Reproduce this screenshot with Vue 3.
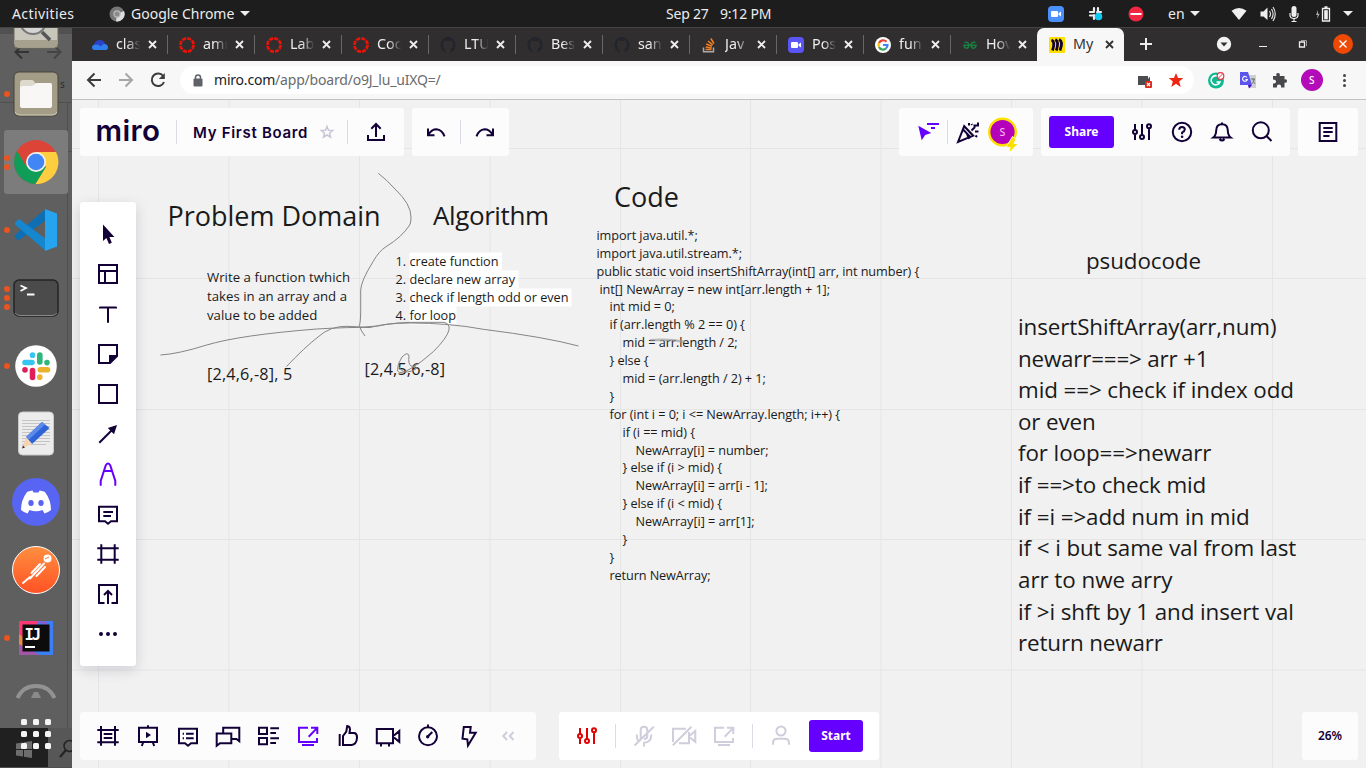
<script setup>
// circle as a path segment, so every icon is one stroke path plus one fill path
const c = (x, y, r) => `M${x - r} ${y}a${r} ${r} 0 1 0 ${2 * r} 0a${r} ${r} 0 1 0 ${-2 * r} 0`

const sliders = { s: `M5 4V9.5M5 14.5V20M12 4V14.5M19 9V20${c(5, 12, 2)}${c(12, 17, 2)}${c(19, 6.3, 2)}` }
const icons = {
  cursor: { f: 'M7 2.5V19L10.4 16L13 22L15.8 20.8L13.4 15H18.4Z' },
  template: { s: 'M3 3H21V21H3ZM3 9H21M9 9V21' },
  text: { s: 'M4 4.700V5.500H20V4.700M12 5.500V20.700' },
  sticky: { s: 'M3 3H21V14L14 21H3Z', f: 'M13 13H21.5L13 21.5Z' },
  square: { s: 'M3 3H21V21H3Z' },
  arrow: { s: 'M3.3 20.7L17 7', f: 'M21 3L11.8 6L18 12.2Z' },
  pen: { s: 'M4.7 23.7V19L9.8 3.2Q12 0 14.2 3.2L19.3 19V23.7M8 9H16' },
  comment: { s: 'M3 4.8H21V19.3H15L12 21.7L9 19.3H3ZM7.3 10H17M7.3 14H15' },
  frame: { s: 'M5.3 2.3V21.7M18.7 2.3V21.7M1.3 6.3H22.7M1.3 17.7H22.7' },
  upload: { s: 'M8.5 21H3V3H21V21H15.5M12 22V9M8 13L12 9L16 13' },
  more: { f: c(5, 12, 2) + c(12, 12, 2) + c(19, 12, 2) },
  export: { s: 'M4 15V20H20V15M12 17V4M7.3 8.7L12 4L16.7 8.7' },
  undo: { s: 'M4 8.5V15.2H10.5M4.5 14.5Q7.5 9.3 12.5 9.3Q18 9.8 20.5 16.3' },
  redo: { s: 'M20 8.5V15.2H13.5M19.5 14.5Q16.5 9.3 11.5 9.3Q6 9.8 3.5 16.3' },
  reactions: { s: 'M11 4H23M15 8H19', f: 'M2.3 5.7L15.3 13L9.2 15L5.7 20.3Z' },
  party: { s: 'M2 22L8.2 6.2L17.2 15.7ZM7 9.5L15 17.6M11 14L13 19M15.5 10.5L18.5 7.5V5.5H22V2.5M19 11.5H22.5M13 3V5.5M19.5 15.5L21 17M15.5 4L16 5' },
  sliders,
  help: { s: `${c(12, 12, 9.2)}M9.2 9.8Q9.2 7 12 7Q14.8 7 14.8 9.5Q14.8 11 12.1 12.5V14.3`, f: c(12.1, 16.8, 1.3) },
  bell: { s: 'M3.3 17.5Q6 15.5 6.2 10.5Q6.3 4.3 12 4.3Q17.7 4.3 17.8 10.5Q18 15.5 20.7 17.5ZM12 2.5V4M9.5 19Q12 22 14.5 19' },
  search: { s: `${c(10.8, 10.3, 8)}M16.5 16L21.5 21` },
  notes: { s: 'M3.7 3H20.3V21H3.7ZM7.3 8H16.7M7.3 12H16.7M7.3 16H13.5' },
  frames: { s: 'M5 2V21.7M19 2V21.7M1.3 6H22.7M1.3 18.3H22.7M7.7 10H16.3M7.7 14H16.3' },
  present: { s: 'M3 3.7H21V18H3ZM12 1.3V3.7M7.3 18L5.8 22M16.7 18L18.2 22', f: 'M10 7.8L15 11L10 14.2Z' },
  cards: { s: 'M3 4.7H21V19.3H15L12 21.7L9 19.3H3ZM6.7 9.7H8M10 9.7H17.7M6.7 14.3H8M10 14.3H17.7' },
  chat: { s: 'M7.2 9V3.7H23.3V17.2L20.5 15H16M.7 21.7V9.5H15.3V19.3H4Z' },
  list: { s: 'M3 3.7H11V10H3ZM3 14H11V20.3H3ZM14.3 4.3H23M14.3 9H20M14.3 14.3H23M14.3 19H20' },
  share: { s: 'M12 3.7H3V18H21V14M12.7 12.7L20.5 4.6M15 3.7H21.3V10M6 21H18' },
  thumb: { s: 'M3.7 10V22M7 21V12L10.3 7.5L11.2 2Q14 2.2 14 5.5L13.5 9H18.5Q21.3 10 21 14Q20.5 20.5 15.5 21Z' },
  camera: { s: 'M.8 5H17V19.3H.8ZM18 11.5L23.3 7V17.8L18 13.5M5 19.3V22.5M13 19.3V22.5' },
  timer: { s: `${c(12, 12.3, 9)}M12 .5V3M12 12.3L16.3 8`, f: c(11.7, 12.7, 1.7) },
  bolt: { s: 'M7.8 3H14.7L14 8.7H19.7L12 21.5L11.3 15.3L6.5 14.7Z' },
  collapse: { s: 'M11 8L7.3 12L11 16M17.5 8L13.8 12L17.5 16' },
  micoff: { s: 'M8.7 15V6Q8.7 2.7 12 2.7Q15.3 2.7 15.3 6V12Q15.3 15 12 15M4.7 10.5Q4.7 15 6.5 17M19.3 10.5Q19.3 18.7 12 18.7V22.5M2.5 21.5L21.8 2.7' },
  camoff: { s: 'M1 18V4.7H14M17 8V19.3H7M18 11.5L23.3 7V17.8L18 13.5M.8 21.3L19.5 2.7' },
  person: { s: `${c(12, 7, 4.6)}M4 20.7V19Q4 14.7 8.3 14.7H15.7Q20 14.7 20 19V20.7` },
}

const tools = ['cursor', 'template', 'text', 'sticky', 'square', 'arrow', 'pen', 'comment', 'frame', 'upload', 'more']
const bottomTools = ['frames', 'present', 'cards', 'chat', 'list', 'share', 'thumb', 'camera', 'timer', 'bolt', 'collapse']

const tabs = [
  ['cloud', 'clas'], ['canvas', 'amr'], ['canvas', 'Lab'], ['canvas', 'Coc'], ['github', 'LTU'], ['github', 'Bes'],
  ['github', 'san'], ['stack', 'Jav'], ['zoom', 'Pos'], ['google', 'fun'], ['gfg', 'Hov'], ['miro', 'My'],
]

const dock = [
  ['viewer', 0], ['files', 1], ['chrome', 2], ['code', 1], ['terminal', 3], ['slack', 1],
  ['editor', 0], ['discord', 0], ['postman', 0], ['idea', 1],
]

const gridX = [98.5, 229, 359.5, 490, 620.5, 750.5, 881, 1011.5, 1142, 1272.5]
const gridY = [148.5, 278.5, 409.5, 539.5, 670]

// board text: content, x, baseline, size, advance width
const code = [
  ['import java.util.*;', 0, 101.3], ['import java.util.stream.*;', 0, 145.5],
  ['public static void insertShiftArray(int[] arr, int number) {', 0, 322.7],
  ['int[] NewArray = new int[arr.length + 1];', 3, 230.5], ['int mid = 0;', 13, 65.3],
  ['if (arr.length % 2 == 0) {', 13, 135.3], ['mid = arr.length / 2;', 26, 115.2], ['} else {', 13, 39],
  ['mid = (arr.length / 2) + 1;', 26, 143.3], ['}', 13, 5],
  ['for (int i = 0; i <= NewArray.length; i++) {', 13, 230.5], ['if (i == mid) {', 26, 72.5],
  ['NewArray[i] = number;', 39, 133], ['} else if (i > mid) {', 26, 99.5], ['NewArray[i] = arr[i - 1];', 39, 132.3],
  ['} else if (i < mid) {', 26, 99.5], ['NewArray[i] = arr[1];', 39, 119], ['}', 26, 5], ['}', 13, 5],
  ['return NewArray;', 13, 101],
].map(([t, dx, w], i) => [t, 596.5 + dx, 240 + i * 18 - (i > 3) - (i > 12), 12.7, w])

const pseudo = [
  ['insertShiftArray(arr,num)', 335, 258.5], ['newarr===> arr +1', 367, 190.5], ['mid ==> check if index odd', 398, 276],
  ['or even', 430, 77.7], ['for loop==>newarr', 461, 193.5], ['if ==>to check mid', 493, 188.3],
  ['if =i =>add num in mid', 525, 231.7], ['if < i but same val from last', 556, 278.3], ['arr to nwe arry', 588, 154.5],
  ['if >i shft by 1 and insert val', 620, 276], ['return newarr', 651, 145],
].map(([t, y, w]) => [t, 1018, y, 22.4, w])

const steps = [['1.', 'create function', 89, 92.5], ['2.', 'declare new array', 105.5, 109], ['3.', 'check if length odd or even', 159, 162], ['4.', 'for loop', 46.5, 47]]

const texts = [
  ['Problem Domain', 167.5, 225.5, 27, 213], ['Algorithm', 433, 225, 26, 116], ['Code', 614, 206.7, 27, 65],
  ['Write a function twhich', 207, 282, 13.2, 143], ['takes in an array and a', 207, 301, 13.2, 140], ['value to be added', 207, 320, 13.2, 110.3],
  ['[2,4,6,-8], 5', 207, 379.5, 16.2, 85.3], ['[2,4,5,6,-8]', 364.5, 374.7, 16.2, 80.5], ['psudocode', 1086, 268.7, 22.4, 115],
  ...steps.flatMap(([n, t, w], i) => [[n, 395.5, 266 + i * 18, 12.7, 10.7], [t, 409.5, 266 + i * 18, 12.7, w]]),
  ...code, ...pseudo,
]
</script>

<template>
  <div class="screen">
    <header class="topbar">
      <span class="activities">Activities</span>
      <svg class="appicon" width="16" height="16" viewBox="0 0 16 16"><circle cx="8" cy="8" r="7.5" fill="#777" /><path d="M8 8L15 5A7.5 7.5 0 0 1 7 15.4Z" fill="#ddd" /><circle cx="8" cy="8" r="3.7" fill="#bbb" /><circle cx="8" cy="8" r="2.5" fill="#8b8b8b" /></svg>
      <span class="appname">Google Chrome</span>
      <i class="caret"></i>
      <span class="date">Sep 27</span><span class="time">9:12 PM</span>
      <div class="tray">
        <svg width="16" height="16" viewBox="0 0 16 16"><rect width="16" height="16" rx="4" fill="#4a90ff" /><rect x="3" y="5" width="7" height="6" rx="1" fill="#fff" /><path d="M10.5 7.3L13 5.5V10.5L10.5 8.7Z" fill="#fff" /></svg>
        <svg class="t-slack" width="16" height="16" viewBox="0 0 16 16"><path d="M6 2V7M10 2V7M2 6H7M9 6H14M2 9.5H7M6 9V14" stroke="#eee" stroke-width="2.200" stroke-linecap="round" stroke-dasharray="4 1" /><circle cx="10.500" cy="10.500" r="3.800" fill="#12c8f0" /></svg>
        <svg class="t-stop" width="16" height="16" viewBox="0 0 16 16"><circle cx="8" cy="8" r="7.5" fill="#f02642" /><path d="M2.5 8H13.5" stroke="#fff" stroke-width="2" /></svg>
        <span class="lang">en</span><i class="caret"></i>
        <svg class="t-wifi" width="16" height="16" viewBox="0 0 16 16"><path d="M.5 4.8Q8 -1 15.5 4.8L8 14Z" fill="#f0f0f0" /></svg>
        <svg class="t-vol" width="16" height="16" viewBox="0 0 16 16"><path d="M.5 5.5H3.5L7.5 1.5V14L3.5 10.5H.5Z" fill="#eee" /><path d="M9.5 5Q11.5 8 9.5 11M11.5 3Q14.7 8 11.5 13M13 1Q17.5 8 13 15" stroke="#ddd" stroke-width="1.2" fill="none" /></svg>
        <svg class="t-mic" width="16" height="16" viewBox="0 0 16 16"><rect x="5.5" y="0" width="5" height="11" rx="2.5" fill="#eee" /><path d="M4 7V9Q4 12.5 8 12.5Q12 12.5 12 9V7M8 13V15.5M5.5 15.5H10.5" stroke="#eee" fill="none" stroke-width="1.2" /></svg>
        <svg class="t-bat" width="16" height="16" viewBox="0 0 16 16"><path d="M7.5 2.5H14.5V15H7.5ZM9.5 1H12.5" stroke="#eee" fill="none" stroke-width="1.3" /><rect x="9.2" y="4.2" width="3.6" height="9.2" fill="#eee" /><path d="M3 4L1 9H2.7L2 13L4.7 7.7H3Z" fill="#aaa" /></svg>
        <i class="caret"></i>
      </div>
    </header>

    <div class="body">
      <aside class="dock">
        <svg class="ghost" width="72" height="741" viewBox="0 28 72 741">
          <path d="M0 28H72V34H0Z" fill="#515151" />
          <path d="M29 52H16M22 45.500L15.500 52L22 58.500" stroke="#333" stroke-width="2" fill="none" />
          <path d="M47 52H60M54 45.500L60.500 52L54 58.500" stroke="#444" stroke-width="2" fill="none" />
          <path d="M0 102.500H72M67.500 103V728M67.500 151.500H72M0 767.500H72" stroke="#4f4f4f" fill="none" />
          <path d="M48 728H72V767H48Z" fill="#575757" /><path d="M0 728H48V767H0Z" fill="#202020" />
          <path d="M60 757L66 750" stroke="#222" stroke-width="2" /><circle cx="69.500" cy="746" r="5.500" stroke="#222" stroke-width="1.500" fill="none" />
          <path d="M16 743.500L23 742.500V749H16ZM24 742.300L32 741V749H24ZM16 750H23V756.500L16 755.500ZM24 750H32V758L24 756.800Z" fill="#6d6d6d" />
          <text x="60" y="88" font-size="10" fill="#2b2b2b" font-family="Noto Sans">s</text>
        </svg>
        <div v-for="([name, dots], i) in dock" :key="i" class="app" :class="{ on: name === 'chrome' }">
          <span class="dots"><i v-for="n in dots" :key="n"></i></span>
          <svg width="48" height="48" viewBox="0 0 48 48">
            <g v-if="name === 'viewer'">
              <rect x="2" y="2" width="44" height="44" rx="4" fill="#c9c6bc" stroke="#6c6859" /><path d="M2.500 38V41.500Q2.500 45.500 6.500 45.500H41.500Q45.500 45.500 45.500 41.500V38Z" fill="#a6a08f" />
              <circle cx="21" cy="19" r="13" fill="#d5d5d5" stroke="#777" stroke-width="2" /><path d="M30 30L38 38" stroke="#555" stroke-width="3.500" />
            </g>
            <g v-else-if="name === 'files'">
              <rect x="2" y="2" width="44" height="44" rx="5" fill="#a39c87" stroke="#48453b" /><path d="M3 42Q4 45 8 45H40Q44 45 45 42" stroke="#d0cab8" fill="none" />
              <path d="M8 13Q8 10 11 10H20Q22 10 23 13H38Q40 13 40 15V20H8Z" fill="#ddd9cd" /><path d="M8 18Q8 16 10 16H20L25 13H38Q40 13 40 15V36Q40 38 38 38H10Q8 38 8 36Z" fill="#f8f7f5" />
            </g>
            <g v-else-if="name === 'chrome'">
              <circle cx="24" cy="24" r="22" fill="#db4437" /><path d="M5 13A22 22 0 0 0 23.500 46L34 30L24 24L14 28Z" fill="#109d58" /><path d="M24 14H44A22 22 0 0 1 23.500 46L34 29Z" fill="#ffcd40" />
              <circle cx="24" cy="24" r="10" fill="#f1f1f1" /><circle cx="24" cy="24" r="8.300" fill="#4285f4" />
            </g>
            <g v-else-if="name === 'code'">
              <path d="M33 3.500L3 29Q2 30.500 3.500 32L6.500 34.500L34 14Z" fill="#0f6fb5" /><path d="M34 45L3 18.500Q2.500 17 3.500 16L7 13L34 33Z" fill="#1587cf" /><path d="M33 3L45 7.500V40.500L33 45Z" fill="#27a4f0" />
            </g>
            <g v-else-if="name === 'terminal'">
              <rect x="2" y="6" width="44" height="36" rx="5" fill="#4b4b4b" stroke="#252525" stroke-width="1.500" /><path d="M3 39Q5 41.500 8 41.500H40Q43 41.500 45 39" stroke="#888" fill="none" />
              <path d="M8.500 11.500L14 14L8.500 17M15 20.500H22.500" stroke="#fff" stroke-width="1.800" fill="none" />
            </g>
            <g v-else-if="name === 'slack'" stroke-width="5.600" stroke-linecap="round">
              <circle cx="24" cy="24" r="20.800" fill="#fff" />
              <path d="M13 20.500H20M20.500 13V13.200" stroke="#36c5f0" /><path d="M27.800 13V20M35 20.500V20.600" stroke="#2eb67d" />
              <path d="M28.300 27.800H35.500M27.800 35V35.200" stroke="#ecb22e" /><path d="M20.500 28.500V35.500M13 27.800V28" stroke="#e01e5a" />
            </g>
            <g v-else-if="name === 'editor'">
              <rect x="6.500" y="2" width="35" height="43" rx="4" fill="#ececec" stroke="#c8c8c8" />
              <path d="M10 10.500H38M10 13.500H38M10 16.500H38M10 19.500H38M10 22.500H38M10 25.500H38M10 28.500H38M10 31.500H38M10 34.500H34" stroke="#c4c4c4" />
              <path d="M30 12L37.500 18L20 34L14 27Z" fill="#2f64d8" /><path d="M30 12L33 14.500L16.500 30L14 27Z" fill="#5e8bea" /><path d="M14 27L20 34L10 38.500Z" fill="#f3d3b0" /><path d="M10 38.500L11 35.500L13 37.500Z" fill="#333" />
            </g>
            <g v-else-if="name === 'discord'">
              <circle cx="24" cy="24" r="24" fill="#5865f2" />
              <path d="M15 14Q18 12.500 20.500 12.500L21.500 14.500H26.500L27.500 12.500Q30 12.500 33 14Q39 22 39 32Q36 34.500 32.500 35.500L30.500 32Q24 34.500 17.500 32L15.500 35.500Q12 34.500 9 32Q9 22 15 14Z" fill="#fff" />
              <ellipse cx="19" cy="25" rx="2.700" ry="3" fill="#5865f2" /><ellipse cx="29" cy="25" rx="2.700" ry="3" fill="#5865f2" />
            </g>
            <g v-else-if="name === 'postman'">
              <defs><linearGradient id="pm" x1="0" y1="0" x2="0" y2="1"><stop offset="0" stop-color="#ff8f3f" /><stop offset="1" stop-color="#ff5224" /></linearGradient></defs>
              <circle cx="24" cy="24" r="23.500" fill="url(#pm)" stroke="#fff" />
              <circle cx="35.500" cy="12.500" r="4" fill="#fff" /><path d="M33 13L37 11" stroke="#ff7d35" /><path d="M32 17.500L18 32.500M28 18L19.500 27M33 21L24.500 30M18 31L11 37" stroke="#fff" stroke-width="1.900" stroke-linecap="round" />
            </g>
            <g v-else-if="name === 'idea'">
              <path d="M7 7H41V41H7Z" fill="#3b7ff5" /><path d="M7 7H28L7 28Z" fill="#f93a74" /><path d="M7 20L20 30L7 36Z" fill="#e88a45" /><path d="M7 30L28 41H7Z" fill="#a256a8" /><path d="M24 7L34 7L40 16Z" fill="#7c62d8" />
              <rect x="10.500" y="10.500" width="27" height="27" fill="#0c0c0c" /><text x="12.500" y="25.500" font-size="15.500" font-weight="700" fill="#fff" font-family="DejaVu Sans Mono" textLength="16.500">IJ</text><path d="M13 33H23" stroke="#fff" stroke-width="2" />
            </g>
          </svg>
        </div>
        <svg class="updater" width="48" height="14" viewBox="0 0 48 14"><path d="M5.500 14Q11 2 24 2Q37 2 42.500 14" stroke="#929292" stroke-width="4" fill="none" /><path d="M22 8H26L29 14H19Z" fill="#8a8a8a" /></svg>
        <div class="appgrid"><i v-for="n in 9" :key="n"></i></div>
      </aside>

      <main class="browser">
        <nav class="tabs">
          <div v-for="([fav, label], i) in tabs" :key="i" class="tab" :class="{ active: fav === 'miro', last: i === 10 }">
            <svg width="16" height="16" viewBox="0 0 16 16">
              <g v-if="fav === 'cloud'"><path d="M2 8Q3 3 8 3Q12 3 13 7L8 12L2 10Z" fill="#2a41c8" /><path d="M3 13Q0 13 0 10.500Q0 8 3 7.500Q7 7 9 9.500Q10 6.500 13 7Q16 7.500 16 10.500Q16 13 13.500 13Z" fill="#2f7ff0" /></g>
              <circle v-else-if="fav === 'canvas'" cx="8" cy="8" r="6.600" fill="none" stroke="#e81408" stroke-width="2.700" stroke-dasharray="4.100 1.084" />
              <path v-else-if="fav === 'github'" d="M8 0A8 8 0 0 0 5.500 15.500V13Q3.500 13.500 2.500 11.500L4 12Q4.500 12.500 5.500 12Q3 11 3 8Q3 6 4 5L4 3L6 4H10L12 3V5Q13 6 13 8Q13 11 10.500 12V15.500A8 8 0 0 0 8 0Z" fill="#22262c" />
              <g v-else-if="fav === 'stack'" fill="none" stroke-width="1.500"><path d="M2.500 10.500V14.700H12.500V10.500" stroke="#aaa" /><path d="M4.500 12.500H10.500M4.700 10L10.700 10.900M5.200 7L11 9.200M7 4L11.800 7.800M9.800 1.500L13 6.500" stroke="#f48024" /></g>
              <g v-else-if="fav === 'zoom'"><rect width="16" height="16" rx="4" fill="#5b55f5" /><rect x="3" y="5" width="7" height="6" rx="1" fill="#fff" /><path d="M10.500 7.300L13 5.500V10.500L10.500 8.700Z" fill="#fff" /></g>
              <g v-else-if="fav === 'google'" fill="none" stroke-width="2.200"><circle cx="8" cy="8" r="8" fill="#fff" /><path d="M11.500 4.800A4.500 4.500 0 0 0 4 6" stroke="#ea4335" /><path d="M4 6A4.500 4.500 0 0 0 4 10" stroke="#fbbc05" /><path d="M4 10A4.500 4.500 0 0 0 11 11.500" stroke="#34a853" /><path d="M11 11.500A4.500 4.500 0 0 0 12.500 8H8" stroke="#4285f4" /></g>
              <g v-else-if="fav === 'gfg'" fill="none" stroke="#168040" stroke-width="1.500"><path d="M2.500 5.500Q6.800 4.500 6.800 8Q6.800 11.200 4.500 11.200Q2.200 11.200 2 8.300H14Q13.800 11.200 11.500 11.200Q9.200 11.200 9.200 8Q9.200 4.500 13.500 5.500" /></g>
              <g v-else><rect width="16" height="16" rx="1" fill="#ffe000" /><path d="M2.500 3Q6.500 4.500 3.500 13.500M6.300 2.500Q10.300 4.500 7.300 13.500M10 2.500Q14.500 4.500 11 13.500" stroke="#120037" stroke-width="2.800" fill="none" /></g>
            </svg>
            <span class="label">{{ label }}</span>
            <svg class="x" width="9" height="9" viewBox="0 0 9 9"><path d="M1 1L8 8M8 1L1 8" stroke="currentColor" stroke-width="1.900" /></svg>
          </div>
          <svg class="winctl" width="242" height="33" viewBox="1124 28 242 33" fill="none">
            <path d="M1140 44H1152M1146 38V50" stroke="#eee" stroke-width="2" /><circle cx="1224" cy="44" r="7.200" fill="#f3f3f3" /><path d="M1220.500 42.500H1227.500L1224 46.500Z" fill="#333" />
            <path d="M1259 46.500H1267" stroke="#eee" /><path d="M1299.500 42H1304.500V47H1299.500Z" stroke="#eee" stroke-width="1.300" /><path d="M1301 40.500H1306.500V46" stroke="#999" />
            <circle cx="1343" cy="44" r="10" fill="#ee4a06" /><path d="M1339.500 40.500L1346.500 47.500M1346.500 40.500L1339.500 47.500" stroke="#fff" stroke-width="1.400" />
          </svg>
        </nav>

        <div class="toolbar">
          <svg width="108" height="38" viewBox="72 61 108 38" fill="none" stroke="#3b3c3e" stroke-width="2">
            <path d="M101 80H88.500M94.500 73.500L88 80L94.500 86.500" /><path d="M119 80H131.500M125.500 73.500L132 80L125.500 86.500" stroke="#a5a6a8" />
            <path d="M163.200 76A6.300 6.300 0 1 0 164 82" /><path d="M164.800 73V79H158.800Z" fill="#3b3c3e" stroke="none" />
          </svg>
          <div class="omnibox">
            <svg width="10" height="13" viewBox="0 0 10 13"><rect x=".5" y="4.500" width="9" height="8" rx="1" fill="#5f6368" /><path d="M2.500 5V3.500Q2.500 1 5 1Q7.500 1 7.500 3.500V5" stroke="#5f6368" stroke-width="1.500" fill="none" /></svg>
            <span class="url"><b>miro.com</b>/app/board/o9J_lu_uIXQ=/</span>
          </div>
          <svg class="ext" width="236" height="38" viewBox="1130 61 236 38">
            <path d="M1138 76H1148V79L1150 76.500V85H1138Z" fill="#4a4c50" /><rect x="1145" y="81" width="7" height="7" rx="1" fill="#dc2b1c" /><path d="M1147 83L1150 86M1150 83L1147 86" stroke="#fff" stroke-width="1.200" />
            <path d="M1176 73L1178 78H1183.300L1179.200 81.500L1180.700 87L1176 83.800L1171.300 87L1172.800 81.500L1168.700 78H1174Z" fill="#f02410" />
            <circle cx="1216" cy="80.500" r="8" fill="#11b991" /><path d="M1219 77A4.600 4.600 0 1 0 1220 82H1216.500" stroke="#fff" stroke-width="1.600" fill="none" /><circle cx="1220.500" cy="76" r="3.300" fill="#fff" stroke="#e33b4c" stroke-width="1.200" /><path d="M1218.500 78L1222.500 74" stroke="#e33b4c" />
            <path d="M1246 75H1256V88H1249Z" fill="#cfd0d4" /><path d="M1240 72H1248L1252 85H1240Z" fill="#5b55ee" /><path d="M1248 85H1252L1249 88.500Z" fill="#4308c8" /><path d="M1247 77.500A2.400 2.400 0 1 0 1247.300 79.500H1245.500" stroke="#fff" fill="none" stroke-width="1.100" /><path d="M1251 79H1255M1253 78V79Q1253 82 1255 84M1254.500 79Q1254 82 1251.500 84" stroke="#777" fill="none" />
            <path d="M1273 76H1276.500Q1275.500 73 1278 73Q1280.500 73 1279.700 76H1284.500V79.500Q1287 78.500 1287 81Q1287 83.500 1284.500 82.500V87.500H1281Q1281.500 84.500 1279 84.500Q1276.500 84.500 1277 87.500H1273V83.500Q1276 83.500 1276 81.500Q1276 79.500 1273 79.500Z" fill="#46484b" />
            <circle cx="1312" cy="80" r="11" fill="#b30bb8" /><text x="1309" y="84" font-size="10" fill="#fff" font-family="Noto Sans" font-weight="500">S</text>
            <circle cx="1344.500" cy="75.500" r="1.500" fill="#444" /><circle cx="1344.500" cy="80.500" r="1.500" fill="#444" /><circle cx="1344.500" cy="85.500" r="1.500" fill="#444" />
          </svg>
        </div>

        <section class="board">
          <svg class="canvas" width="1294" height="668" viewBox="72 100 1294 668">
            <path v-for="x in gridX" :key="'x' + x" :d="`M${x} 100V768`" stroke="#e5e5e5" />
            <path v-for="y in gridY" :key="'y' + y" :d="`M72 ${y}H1366`" stroke="#e5e5e5" />
            <rect v-for="(s, i) in steps" :key="'s' + i" x="409.500" :y="252.500 + i * 18" :width="s[3]" height="18" fill="#fff" />
            <text v-for="(t, i) in texts" :key="i" :x="t[1]" :y="t[2]" :font-size="t[3]" :textLength="t[4]">{{ t[0] }}</text>
            <g class="ink">
              <path d="M378.300 173.300Q387 180 395 189Q411 204 411 217Q411 223 409.700 225Q402 237 386 246.700Q379 251 373 261.700Q361 281 360.700 290V312Q360.500 323 359.300 325.700Q361 331 365 336" />
              <path d="M160.500 355Q178 354 206.700 345Q240 335 316.700 329Q350 327 370 327.500Q386 323 410 323Q450 323 483.300 329.300Q545 337 578.500 346" />
              <path d="M286.500 366.500Q305 347 318 337Q330 326 347 326.300Q363 328 378 326Q395 322 420 322.300H443Q450 323 449 330Q447 338 433.300 351.700Q422 362 410 369Q400 375 397.500 371Q397 364 402 357Q408 351 409 356Q408 364 411 366Q422 367 412 371Q402 374 399 367" />
            </g>
            <path d="M650 340.300Q668 338.500 685 342" stroke="#999" stroke-width="2.500" stroke-opacity=".65" fill="none" />
          </svg>

          <div class="row top">
            <div class="panel p1">
              <svg class="logo" width="66" height="32" viewBox="0 0 66 32"><text x="-.5" y="25" textLength="64.500">miro</text></svg>
              <i class="sep"></i>
              <span class="title">My First Board</span>
              <svg class="star" width="14" height="14" viewBox="0 0 14 14"><path d="M7 1.500L8.500 5.300L12.700 5.500L9.500 8.200L10.500 12.200L7 10L3.500 12.200L4.500 8.200L1.300 5.500L5.500 5.300Z" fill="none" stroke="#c9c5d8" stroke-width="1.500" /></svg>
              <i class="sep"></i>
              <svg class="ico" viewBox="0 0 24 24"><path :d="icons.export.s" /></svg>
            </div>
            <div class="panel p2">
              <svg class="ico" viewBox="0 0 24 24"><path :d="icons.undo.s" /></svg>
              <i class="sep"></i>
              <svg class="ico" viewBox="0 0 24 24"><path :d="icons.redo.s" /></svg>
            </div>
            <div class="panel p3">
              <svg class="ico violet" viewBox="0 0 24 24"><path :d="icons.reactions.s" /><path :d="icons.reactions.f" class="f" /></svg>
              <i class="sep"></i>
              <svg class="ico" viewBox="0 0 24 24"><path :d="icons.party.s" /></svg>
              <svg class="avatar" width="32" height="36" viewBox="0 0 32 36"><circle cx="15.500" cy="16" r="13.300" fill="#b400ba" stroke="#fde000" stroke-width="2.400" /><text x="12.500" y="20" font-size="10.500">S</text><path d="M25.500 21L19.500 31H23.500L22.500 36L30.500 28H26.500L28.500 23Z" fill="#fbe000" stroke="#fff" stroke-width="1.300" paint-order="stroke" /></svg>
            </div>
            <div class="panel p4">
              <button>Share</button>
              <svg v-for="n in ['sliders', 'help', 'bell', 'search']" :key="n" class="ico" viewBox="0 0 24 24"><path :d="icons[n].s" /><path :d="icons[n].f" class="f" /></svg>
            </div>
            <div class="panel p5"><svg class="ico" viewBox="0 0 24 24"><path :d="icons.notes.s" /></svg></div>
          </div>

          <div class="panel tools">
            <svg v-for="n in tools" :key="n" class="ico" :class="{ violet: n === 'pen' }" viewBox="0 0 24 24"><path :d="icons[n].s" /><path :d="icons[n].f" class="f" /></svg>
          </div>

          <div class="row bottom">
            <div class="panel b1">
              <svg v-for="n in bottomTools" :key="n" class="ico" :class="{ violet: n === 'share', faint: n === 'collapse' }" viewBox="0 0 24 24"><path :d="icons[n].s" /><path :d="icons[n].f" class="f" /></svg>
            </div>
            <div class="panel b2">
              <svg class="ico red" viewBox="0 0 24 24"><path :d="icons.sliders.s" /></svg>
              <i class="sep"></i>
              <svg v-for="n in ['micoff', 'camoff', 'share']" :key="n" class="ico faint" viewBox="0 0 24 24"><path :d="icons[n].s" /></svg>
              <i class="sep"></i>
              <svg class="ico faint" viewBox="0 0 24 24"><path :d="icons.person.s" /></svg>
              <button>Start</button>
            </div>
            <div class="panel b3">26%</div>
          </div>
        </section>
      </main>
    </div>
  </div>
</template>

<style>
body { margin: 0; overflow: hidden; }
</style>

<style scoped>
* { box-sizing: border-box; }
svg { display: block; flex: none; overflow: visible; }
.screen { width: 1366px; height: 768px; overflow: hidden; font-family: "Noto Sans", "Open Sans", sans-serif; background: #f1f1f1; }
.topbar { height: 27px; background: #1d1d1d; color: #ececec; display: flex; align-items: center; font-size: 14px; white-space: pre; line-height: 26px; }
.activities { width: 97px; padding-left: 12px; letter-spacing: .4px; }
.appicon { margin-left: 12px; }
.appname { margin-left: 6px; width: 104px; }
.caret { border: 5px solid transparent; border-top-color: #eee; border-bottom: 0; margin-left: 5px; }
.date { margin-left: 416px; width: 54px; letter-spacing: -.2px; }
.time { letter-spacing: -.2px; }
.tray { margin-left: auto; width: 318px; display: flex; align-items: center; }
.t-slack { margin-left: 24px; }
.t-stop { margin-left: 24px; }
.lang { margin-left: 24px; width: 17px; }
.t-wifi { margin-left: 31px; }
.t-vol { margin-left: 13px; }
.t-mic { margin-left: 10px; }
.t-bat { margin-left: 13px; }
.tray .t-bat + .caret { margin-left: 12px; }
.body { display: flex; height: 741px; }

.dock { position: relative; width: 72px; background: #5f5f5f; overflow: hidden; display: flex; flex-direction: column; flex: none; border-top: 1px solid #444; }
.ghost { position: absolute; left: 0; top: 0; }
.app { position: relative; width: 64px; height: 64px; margin: 0 4px 4px; border-radius: 3px; display: flex; align-items: center; justify-content: center; flex: none; }
.app:nth-of-type(1) { margin-top: -34px; }
.app.on { background: #7c7c7c; }
.app > svg { position: relative; }
.dots { position: absolute; left: 0; top: 0; height: 64px; display: flex; flex-direction: column; justify-content: center; gap: 3px; }
.dots i { width: 6px; height: 6px; border-radius: 50%; background: #e95420; }
.updater { margin: 10px 0 0 12px; }
.appgrid { position: relative; margin: 21px 0 0 21px; width: 30px; display: grid; grid-template-columns: repeat(3, 6px); gap: 6px; }
.appgrid i { width: 6px; height: 6px; border-radius: 1.500px; background: #f4f4f4; }

.browser { width: 1294px; border-top: 1px solid #444; flex: none; }
.tabs { height: 33px; background: #302e2f; display: flex; padding-left: 8px; }
.tab { position: relative; width: 87px; height: 33px; display: flex; align-items: center; padding-left: 12px; color: #eee; flex: none; }
.tab::after { content: ""; position: absolute; right: -1px; top: 7px; width: 1px; height: 19px; background: #686667; }
.tab.last::after, .tab.active::after { display: none; }
.tab.active { background: #f7f7f7; color: #333; border-radius: 7px 7px 0 0; }
.label { margin-left: 8px; width: 25px; height: 22px; line-height: 20px; font-size: 14.3px; -webkit-mask-image: linear-gradient(90deg, #000 45%, transparent 98%); mask-image: linear-gradient(90deg, #000 45%, transparent 98%); }
.active .label { -webkit-mask-image: none; mask-image: none; }
.x { margin-left: 6.500px; }

.toolbar { height: 39px; background: #f7f7f7; border-bottom: 1px solid #c1c3c1; display: flex; align-items: flex-start; position: relative; }
.omnibox { margin-top: 5px; width: 1014px; height: 28px; border-radius: 14px; background: #fff; display: flex; align-items: center; padding-left: 13px; flex: none; }
.url { margin-left: 11px; font-size: 14px; color: #696b6e; line-height: 26px; letter-spacing: -.2px; }
.url b { font-weight: 400; color: #202124; }
.ext { position: absolute; right: 0; top: 0; }

.board { position: relative; height: 668px; background: #f1f1f1; display: flex; flex-direction: column; justify-content: space-between; padding: 8px; }
.canvas { position: absolute; left: 0; top: 0; font-family: "Open Sans", "Noto Sans", sans-serif; fill: #1a1a1a; }
.ink path { fill: none; stroke: #858585; stroke-width: 1; }
.row { position: relative; display: flex; height: 48px; }
.panel { background: #fcfcfc; border-radius: 3px; display: flex; align-items: center; flex: none; }
.ico { width: 24px; height: 24px; fill: none; stroke: #120037; stroke-width: 2; color: #120037; }
.ico .f { fill: currentColor; stroke: none; }
.violet { stroke: #6500ff; color: #6500ff; }
.red { stroke: #e00000; }
.faint { stroke: #d0cddc; color: #d0cddc; }
.sep { width: 1px; height: 24px; background: #dcdae6; flex: none; }
.p1 { width: 324px; padding-left: 16px; }
.logo text { font: 600 29.500px Inter, sans-serif; fill: #120037; }
.p1 .sep:nth-of-type(1) { margin-left: 14px; }
.title { margin-left: 16px; width: 116px; font: 600 15px Inter, sans-serif; color: #120037; white-space: nowrap; letter-spacing: .7px; }
.star { margin-left: 11px; }
.p1 .sep:nth-of-type(2) { margin-left: 13px; }
.p1 .ico { margin-left: 16px; }
.p2 { width: 97px; margin-left: 8px; padding-left: 12px; gap: 12px; }
.p3 { width: 134px; margin-left: 390px; padding-left: 17px; }
.p3 .sep { margin: 0 8px 0 7px; }
.avatar { margin: 4px 0 0 7px; }
.avatar text { fill: #f3b6f4; font-weight: 500; }
.p4 { width: 249px; margin-left: 8px; padding-left: 8px; gap: 16px; }
button { border: 0; padding: 0 0 2px; height: 32px; border-radius: 3px; background: #6500ff; color: #fff; font: 700 12px "Noto Sans", sans-serif; }
.p4 button { width: 65px; }
.p5 { width: 60px; margin-left: 8px; justify-content: center; }
.tools { position: absolute; left: 8px; top: 102px; width: 56px; height: 464px; padding: 20px 0; flex-direction: column; gap: 16px; background: #fff; box-shadow: 0 4px 14px rgba(5, 0, 56, .14); }
.b1 { width: 456px; padding-left: 16px; gap: 16px; }
.b2 { width: 320px; margin-left: 23px; padding-left: 16px; background: #fff; gap: 16px; }
.b2 button { width: 54px; }
.b3 { width: 56px; margin-left: auto; justify-content: center; font-size: 12px; font-weight: 600; color: #120037; padding-bottom: 2px; }
</style>
